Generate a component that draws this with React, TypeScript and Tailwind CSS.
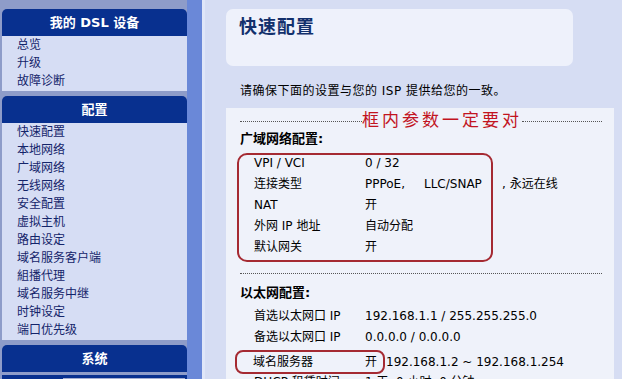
const font = "font-['DejaVu_Sans','Noto_Sans_CJK_SC',sans-serif]";

const navGroups = [
  { title: "我的 DSL 设备", items: ["总览", "升级", "故障诊断"] },
  {
    title: "配置",
    items: [
      "快速配置",
      "本地网络",
      "广域网络",
      "无线网络",
      "安全配置",
      "虚拟主机",
      "路由设定",
      "域名服务客户端",
      "組播代理",
      "域名服务中继",
      "时钟设定",
      "端口优先级",
    ],
  },
];

function NavHeader({ title }: { title: string }) {
  return (
    <div className="h-[27px] bg-[#08308f] rounded-t-[5px] flex items-center justify-center text-white font-bold text-[13px]">
      {title}
    </div>
  );
}

function Sidebar() {
  return (
    <aside className="w-[187px] shrink-0 bg-[#8e9cc9] pl-[2px] pt-[9px] flex flex-col gap-[5px]">
      {navGroups.map((g) => (
        <div key={g.title}>
          <NavHeader title={g.title} />
          <ul className="bg-[#d6ddf4] pl-[15px] pb-[1px]">
            {g.items.map((it) => (
              <li key={it} className="h-[18px] leading-[18px] text-[12px] text-[#14246a]">
                {it}
              </li>
            ))}
          </ul>
        </div>
      ))}
      <div>
        <NavHeader title="系统" />
        <div className="h-[10px] bg-[#08308f] mt-[3px] flex pl-[61px] pt-[3px]">
          <div className="w-[122px] h-full bg-[#a5aed0]" />
        </div>
      </div>
    </aside>
  );
}

function Row({ label, children }: { label: string; children: React.ReactNode }) {
  return (
    <div className="flex h-[21px] items-start pt-[1px] leading-[15px] text-[12px] text-black whitespace-nowrap">
      <span className="w-[125px] shrink-0 pl-[14px]">{label}</span>
      {children}
    </div>
  );
}

export default function App() {
  return (
    <div className={`flex h-[379px] w-[622px] overflow-hidden ${font}`}>
      <Sidebar />
      <div className="w-[15px] shrink-0 bg-[#6a88d8]" />
      <main className="flex-1 bg-[#d6ddf3] border-l-[3px] border-[#e0e6f8] pl-[21px] pt-[9px] pr-[8px]">
        <div className="w-[347px] h-[57px] bg-[#eef1fb] rounded-[7px] px-[13px] pt-[4px]">
          <h1 className="text-[18px] font-bold text-[#12306c] tracking-[1px]">快速配置</h1>
        </div>
        <p className="text-[12px] text-black mt-[16px] pl-[14px] tracking-[0.5px]">请确保下面的设置与您的 ISP 提供给您的一致。</p>
        <section className="mt-[8px] bg-[#eff2fa] h-[300px] pl-[14px] pr-[12px] pt-[2px]">
          <div className="flex items-center h-[20px]">
            <div className="w-[122px] shrink-0 border-b border-dotted border-[#555] mt-[2px]" />
            <span className="text-[17px] tracking-[3px] leading-[20px] text-[#c2141f] whitespace-nowrap">
              框内参数一定要对
            </span>
            <div className="flex-1 border-b border-dotted border-[#555] mt-[2px]" />
          </div>
          <h2 className="text-[13px] font-bold text-black leading-[18px]">广域网络配置:</h2>
          <div className="mt-[5px] w-[256px] border-2 border-[#a52a32] rounded-[10px] -ml-[3px] pl-[1px]">
            <Row label="VPI / VCI">
              <span>0 / 32</span>
            </Row>
            <Row label="连接类型">
              <span className="w-[59px] shrink-0">PPPoE,</span>
              <span className="w-[78px] shrink-0">LLC/SNAP</span>
              <span>, 永远在线</span>
            </Row>
            <Row label="NAT">
              <span>开</span>
            </Row>
            <Row label="外网 IP 地址">
              <span>自动分配</span>
            </Row>
            <Row label="默认网关">
              <span>开</span>
            </Row>
          </div>
          <div className="border-b border-dotted border-[#555] mt-[11px]" />
          <h2 className="text-[13px] font-bold text-black mt-[10px] leading-[18px]">以太网配置:</h2>
          <div className="mt-[6px]">
            <Row label="首选以太网口 IP">
              <span>192.168.1.1 / 255.255.255.0</span>
            </Row>
            <Row label="备选以太网口 IP">
              <span>0.0.0.0 / 0.0.0.0</span>
            </Row>
            <div className="flex items-center text-[12px] text-black -ml-[5px] whitespace-nowrap">
              <div className="flex items-center h-[24px] w-[150px] shrink-0 border-2 border-[#a52a32] rounded-[8px] pl-[16px]">
                <span className="w-[112px] shrink-0">域名服务器</span>
                <span>开</span>
              </div>
              <span className="ml-[1px]">192.168.1.2 ~ 192.168.1.254</span>
            </div>
            <Row label="DHCP 租赁时间">
              <span>1 天, 0 小时, 0 分钟</span>
            </Row>
          </div>
        </section>
      </main>
    </div>
  );
}
